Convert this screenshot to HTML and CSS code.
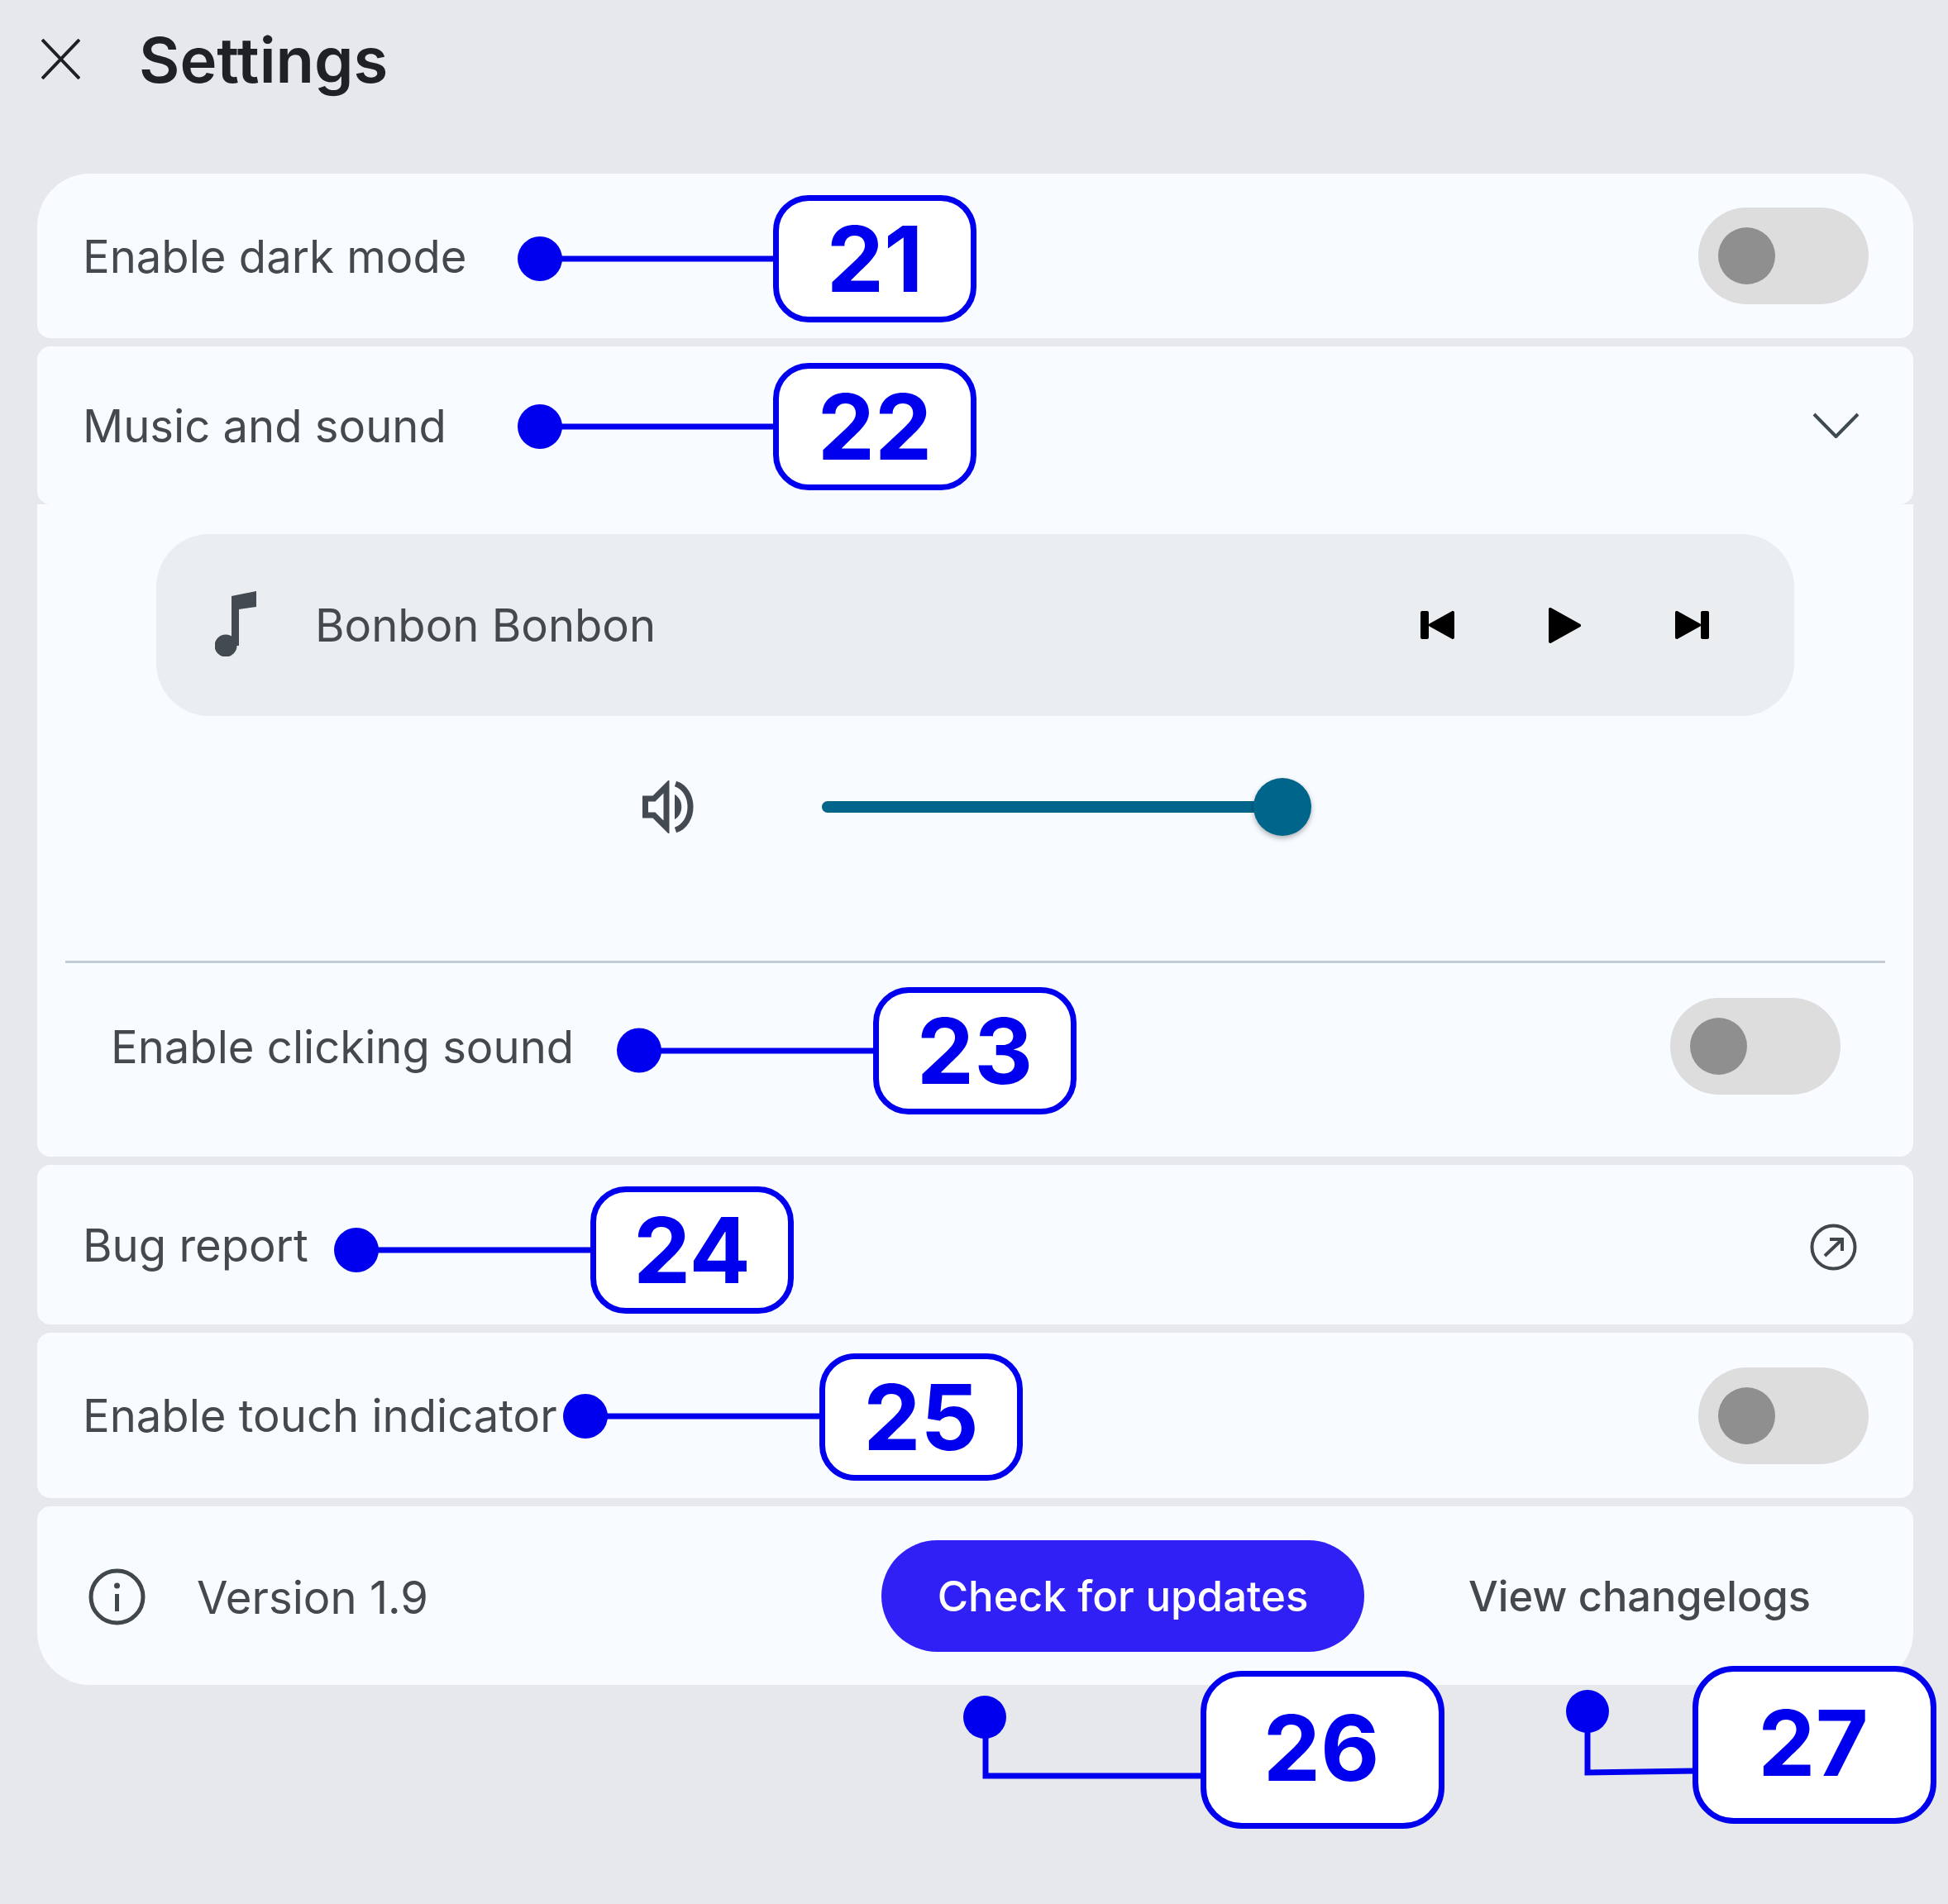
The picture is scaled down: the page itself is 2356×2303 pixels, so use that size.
FILE: index.html
```html
<!DOCTYPE html>
<html lang="en">

<head>
    <meta charset="UTF-8">
    <title>Settings</title>
    <link rel="stylesheet" href="styles.css">
</head>

<body>
    <div id="screen">
        <header class="top-bar">
            <svg class="close-icon" viewBox="0 0 47 49">
                <path d="M1 1 46 48M46 1 1 48" />
            </svg>
            <h1>Settings</h1>
        </header>

        <main class="settings-list">
            <section class="card card-first row">
                <span class="label">Enable dark mode</span>
                <div class="toggle"><span class="knob"></span></div>
            </section>

            <div class="group">
                <section class="card row music-head">
                    <span class="label">Music and sound</span>
                    <svg class="chevron" viewBox="0 0 57 31">
                        <path d="M2 2 28.500 29 55 2" />
                    </svg>
                </section>
                <section class="card music-body">
                    <div class="player">
                        <svg class="note" viewBox="0 0 50 79">
                            <circle cx="13" cy="66" r="13.500" />
                            <path d="M20 6 50 0V19L29 22V66H20Z" />
                        </svg>
                        <span class="label track-name">Bonbon Bonbon</span>
                        <div class="player-controls">
                            <svg class="skip" viewBox="0 0 41 34">
                                <rect x="0" y="0" width="10" height="34" rx="2" />
                                <path d="M39 2V32L12 17Z" />
                            </svg>
                            <svg class="play" viewBox="0 0 39 43">
                                <path d="M2 2V41L37 21.500Z" />
                            </svg>
                            <svg class="skip" viewBox="0 0 41 34">
                                <rect x="31" y="0" width="10" height="34" rx="2" />
                                <path d="M2 2V32L29 17Z" />
                            </svg>
                        </div>
                    </div>
                    <div class="volume">
                        <svg class="speaker" viewBox="0 0 63 64">
                            <path class="speaker-cone" d="M3.500 22H14L29 7V57L14 42H3.500Z" />
                            <path class="speaker-arc" d="M40 4C64 12 64 52 40 60" />
                            <path class="speaker-mid" d="M39 17C50 23 50 41 39 47Z" />
                        </svg>
                        <div class="slider">
                            <div class="slider-track"></div>
                            <span class="slider-thumb"></span>
                        </div>
                    </div>
                    <hr class="divider">
                    <div class="click-row">
                        <span class="label">Enable clicking sound</span>
                        <div class="toggle"><span class="knob"></span></div>
                    </div>
                </section>
            </div>

            <section class="card row row-short">
                <span class="label">Bug report</span>
                <svg class="open-icon" viewBox="0 0 57 57">
                    <circle cx="28.500" cy="28.500" r="26" />
                    <path d="M18 39 38 20M24 19H39V33" />
                </svg>
            </section>

            <section class="card row row-tall">
                <span class="label">Enable touch indicator</span>
                <div class="toggle"><span class="knob"></span></div>
            </section>

            <section class="card card-last version-row">
                <svg class="info-icon" viewBox="0 0 69 69">
                    <circle cx="34.500" cy="34.500" r="31.500" />
                    <path d="M34.500 31V52" />
                    <circle class="info-dot" cx="34.500" cy="21" r="3.500" />
                </svg>
                <span class="label version-text">Version 1.9</span>
                <button class="update-btn" type="button">Check for updates</button>
                <a class="changelog-link" href="#">View changelogs</a>
            </section>
        </main>

        <!-- annotation layer: dots and leader lines -->
        <svg class="leaders" viewBox="0 0 2356 2303">
            <circle cx="653" cy="313" r="27" />
            <path d="M653 313H940" />
            <circle cx="653" cy="516" r="27" />
            <path d="M653 516H940" />
            <circle cx="773" cy="1270.500" r="27" />
            <path d="M773 1271H1060" />
            <circle cx="431" cy="1512" r="27" />
            <path d="M431 1512H720" />
            <circle cx="708" cy="1713" r="27" />
            <path d="M708 1713H996" />
            <circle cx="1191" cy="2077" r="26" />
            <path d="M1192 2077V2148H1456" />
            <circle cx="1920" cy="2070" r="26" />
            <path d="M1920 2070V2144L2052 2142" />
        </svg>
        <div class="tag tag-21">21</div>
        <div class="tag tag-22">22</div>
        <div class="tag tag-23">23</div>
        <div class="tag tag-24">24</div>
        <div class="tag tag-25">25</div>
        <div class="tag tag-big tag-26">26</div>
        <div class="tag tag-big tag-27">27</div>
    </div>
</body>

</html>
```

FILE: styles.css
```css
* {
    box-sizing: border-box;
}

body {
    margin: 0;
    background-color: #e7e8ec;
    font-family: Inter, "Noto Sans", sans-serif;
}

#screen {
    position: relative;
    width: 2356px;
    height: 2303px;
    overflow: hidden;
}

/* the app itself is soft in the capture, the annotations are not */
.top-bar,
.settings-list {
    filter: blur(0.7px);
}

.top-bar {
    height: 210px;
    padding: 47px 0 0 50px;
    display: flex;
    align-items: flex-start;
}

.close-icon {
    width: 47px;
    height: 49px;
    fill: none;
    stroke: #1d2024;
    stroke-width: 4;
}

h1 {
    margin: -21px 0 0 71px;
    font-size: 76px;
    line-height: 92px;
    font-weight: 600;
    color: #1e2125;
}

.settings-list {
    margin: 0 42px 0 45px;
    display: flex;
    flex-direction: column;
    gap: 10px;
}

.group {
    display: flex;
    flex-direction: column;
}

.card {
    background-color: #f8fbff;
    border-radius: 16px;
}

.card-first {
    border-radius: 64px 64px 16px 16px;
}

.card-last {
    border-radius: 16px 16px 64px 64px;
}

.row {
    height: 199px;
    padding: 0 54px 0 55px;
    display: flex;
    align-items: center;
    justify-content: space-between;
}

.row-short {
    height: 193px;
}

.row-tall {
    height: 200px;
}

.label {
    font-size: 54.400px;
    color: #44494e;
}

.toggle {
    width: 206px;
    height: 117px;
    padding-left: 24px;
    border-radius: 59px;
    background-color: #dddddd;
    display: flex;
    align-items: center;
}

.knob {
    width: 69px;
    height: 69px;
    border-radius: 50%;
    background-color: #8f8f8f;
}

.music-head {
    height: 191px;
    padding-right: 65px;
}

.chevron {
    width: 57px;
    height: 31px;
    fill: none;
    stroke: #3f4a50;
    stroke-width: 4;
}

.music-body {
    height: 789px;
    padding-top: 36px;
    border-radius: 0 0 16px 16px;
}

.player {
    height: 220px;
    margin: 0 144px;
    padding: 0 103px 0 71px;
    border-radius: 64px;
    background-color: #ebeef1;
    display: flex;
    align-items: center;
}

.note {
    width: 50px;
    height: 79px;
    margin-top: -3px;
    fill: #434a52;
}

.track-name {
    margin-left: 71px;
}

.player-controls {
    margin-left: auto;
    display: flex;
    align-items: center;
    gap: 114px;
}

.skip {
    width: 41px;
    height: 34px;
    fill: #000;
}

.skip path,
.play path {
    stroke: #000;
    stroke-width: 4;
    stroke-linejoin: round;
}

.play {
    width: 39px;
    height: 43px;
    fill: #000;
}

.volume {
    height: 64px;
    margin-top: 78px;
    padding-left: 732px;
    display: flex;
    align-items: center;
}

.speaker {
    width: 63px;
    height: 64px;
    fill: none;
    stroke: #434a52;
}

.speaker-cone {
    stroke-width: 7;
}

.speaker-arc {
    stroke-width: 7;
}

.speaker-mid {
    fill: #434a52;
    stroke: none;
}

.slider {
    position: relative;
    width: 592px;
    margin-left: 154px;
}

.slider-track {
    width: 556px;
    height: 14px;
    border-radius: 7px;
    background-color: #00658a;
}

.slider-thumb {
    position: absolute;
    right: 0;
    top: -28px;
    width: 70px;
    height: 70px;
    border-radius: 50%;
    background-color: #00658a;
    box-shadow: 0 3px 6px rgba(0, 0, 0, 0.3);
}

.divider {
    height: 3px;
    margin: 154px 34px 0;
    border: none;
    background-color: #c3ccd5;
}

.click-row {
    padding: 42px 88px 0 89px;
    display: flex;
    align-items: center;
    justify-content: space-between;
}

.open-icon {
    width: 57px;
    height: 57px;
    margin: 5px 14px 0 0;
    fill: none;
    stroke: #40484c;
    stroke-width: 4;
}

.version-row {
    height: 216px;
    padding: 0 124px 0 62px;
    display: flex;
    align-items: center;
}

.info-icon {
    width: 69px;
    height: 69px;
    margin-top: 3px;
    fill: none;
    stroke: #40484c;
    stroke-width: 5;
}

.info-dot {
    fill: #40484c;
    stroke: none;
}

.version-text {
    margin: 4px 0 0 62px;
}

.update-btn {
    width: 584px;
    height: 135px;
    margin-left: auto;
    border: none;
    border-radius: 68px;
    background-color: #3120f5;
    color: #fff;
    font-family: inherit;
    font-size: 51px;
    font-weight: 500;
}

.changelog-link {
    margin-left: 126px;
    font-size: 50.500px;
    font-weight: 500;
    color: #44494e;
    text-decoration: none;
}

.leaders {
    position: absolute;
    left: 0;
    top: 0;
    width: 2356px;
    height: 2303px;
    fill: none;
    stroke: #0000ee;
    stroke-width: 7;
}

.leaders circle {
    fill: #0000ee;
    stroke: none;
}

.tag {
    position: absolute;
    width: 246px;
    height: 154px;
    border: 7px solid #0000ee;
    border-radius: 43px;
    background-color: #fff;
    color: #0000ee;
    font-family: Inter, sans-serif;
    font-size: 110px;
    font-weight: 700;
    display: flex;
    align-items: center;
    justify-content: center;
}

.tag-big {
    width: 295px;
    height: 191px;
    padding: 0 3px 6px 0;
    border-radius: 50px;
}

.tag-21 {
    left: 935px;
    top: 236px;
}

.tag-22 {
    left: 935px;
    top: 439px;
}

.tag-23 {
    left: 1056px;
    top: 1194px;
}

.tag-24 {
    left: 714px;
    top: 1435px;
}

.tag-25 {
    left: 991px;
    top: 1637px;
}

.tag-26 {
    left: 1452px;
    top: 2021px;
}

.tag-27 {
    left: 2047px;
    top: 2015px;
}
```
